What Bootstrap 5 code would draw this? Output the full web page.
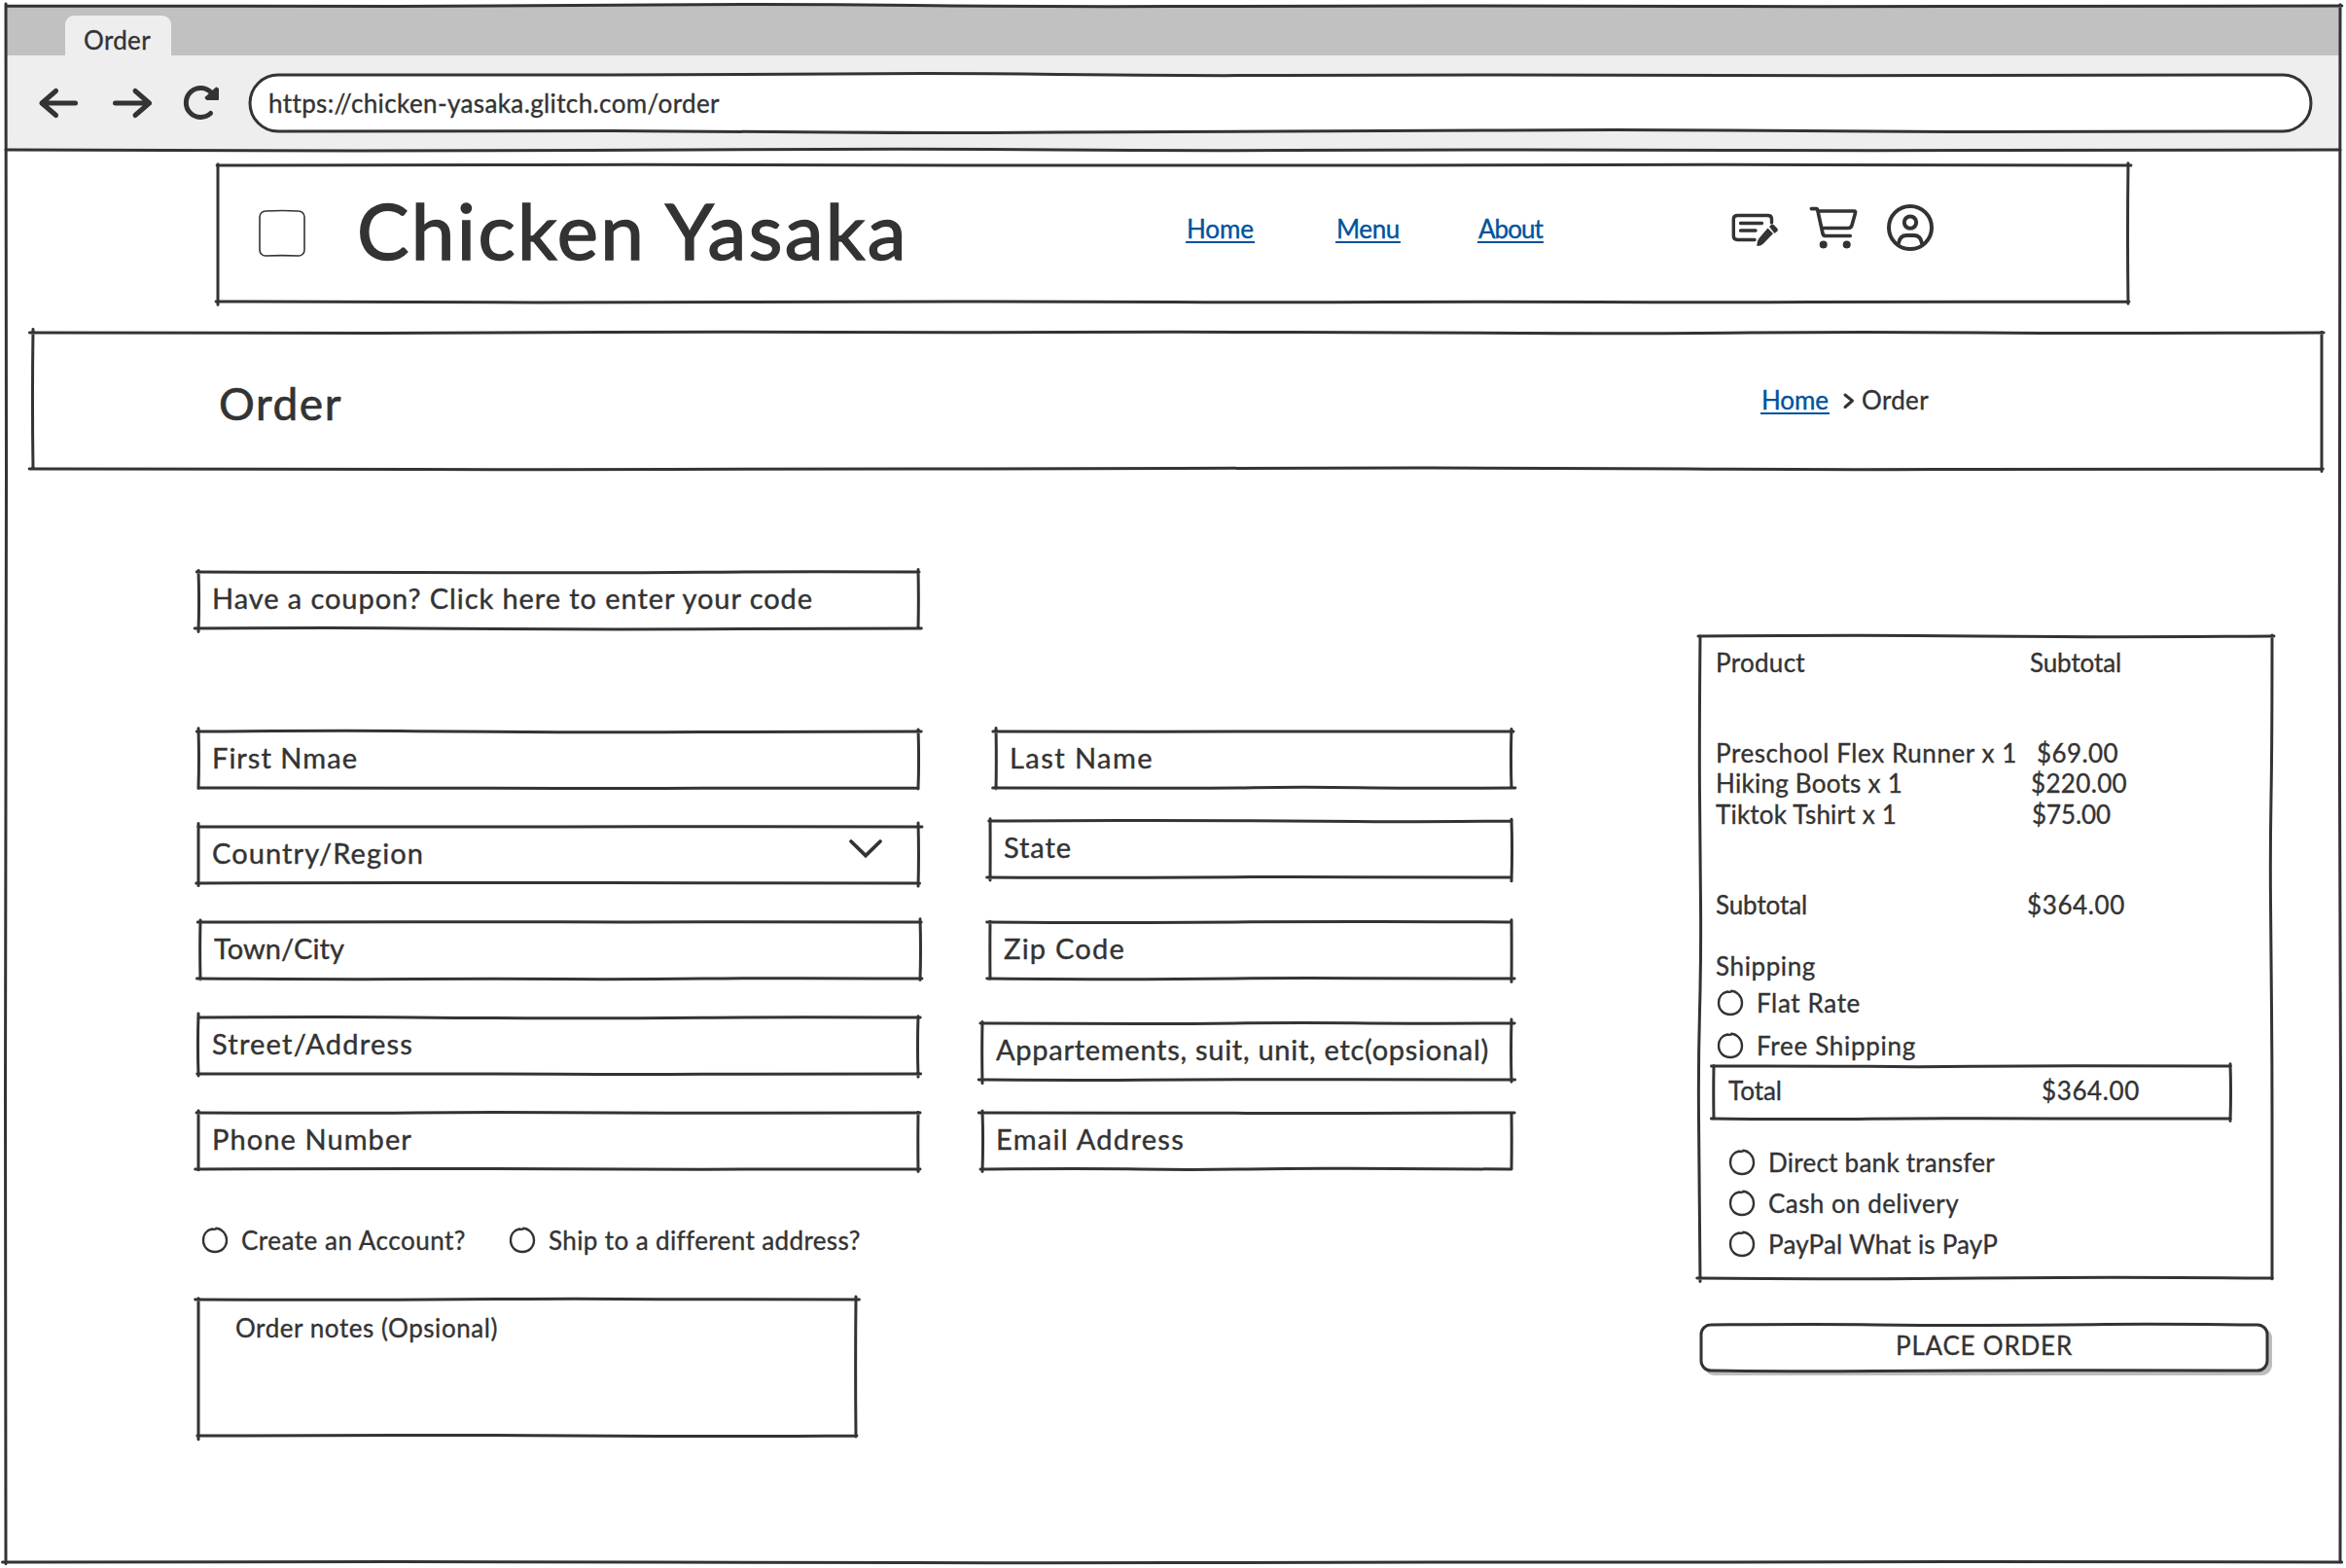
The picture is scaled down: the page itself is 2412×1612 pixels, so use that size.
<!DOCTYPE html>
<html lang="en">
<head>
<meta charset="utf-8">
<title>Order - Chicken Yasaka</title>
<link href="https://cdn.jsdelivr.net/npm/bootstrap@5.3.0/dist/css/bootstrap.min.css" rel="stylesheet">
<style>
:root{--ink:#333;--link:#00529b}
body{width:2412px;height:1612px;overflow:hidden;background:#fff;color:var(--ink);font-family:"Lato","Open Sans",sans-serif;font-size:26px;line-height:31px;-webkit-text-stroke:.35px currentColor;font-kerning:normal}
svg{overflow:visible;flex:none}
[data-w]{white-space:nowrap;display:inline-block}
.sketch{position:relative}
.outline{position:absolute;left:0;top:0;width:100%;height:100%;pointer-events:none;fill:none;stroke:var(--ink);stroke-width:3;stroke-linecap:round}
.window{width:2400px;height:1600px;margin:6px 0 0 6px}
.tabs-strip{height:51px;background:#c1c1c1;padding-left:61px}
.tab-item{width:109px;height:42px;margin-top:10px;background:#eee;border-radius:9px 9px 0 0;padding:10px 0 0 19px;line-height:30px}
.toolbar{height:97px;background:#eee;padding-left:35px}
.address{width:2119px;height:58px;margin:20px 0 0 26px;background:#fff;border-radius:29px;padding-left:19px;line-height:59px}
.brandbar{width:1964px;height:140px;margin:16px 0 0 218px}
.tick{width:46px;height:46px;margin:47px 0 0 43px}
.tick .outline{stroke-width:1.6}
.site-title{font-size:80px;line-height:96px;margin:18px 0 0 54px;width:563px;-webkit-text-stroke-width:1.5px}
.lnk{color:var(--link);text-decoration:none;border-bottom:2.5px solid var(--link);line-height:25px;padding:0 1px}
.titlebar{width:2353px;height:140px;margin:32px 0 0 28px}
.page-title{font-size:46px;line-height:56px;margin:45px 0 0 191px;-webkit-text-stroke-width:.7px}
.crumbs{margin:57px 0 0 1458px}
.field{height:58px;font-size:29px;line-height:54px;padding-left:14px;-webkit-text-stroke-width:.4px}
.left-col{width:742px;margin:106px 0 0 198px}
.mid-col{width:544px;margin:270px 0 0 64px}
.right-col{width:588px;margin:172px 0 0 194px}
.w-740{width:740px}.w-536{width:536px}.w-530{width:530px}
.mt-40{margin-top:40px}.mt-34{margin-top:34px}.mt-46{margin-top:46px}
.notes{width:676px;height:140px;padding:14px 0 0 38px}
.summary{height:660px}
.sum-row{height:31.2px;padding-left:16px}
.sum-name{width:323px}
.opt{height:26px;line-height:27px;gap:14px}
.total{width:531px;height:54px;margin-left:14px;line-height:51px;padding-left:15px}
.total .sum-name{width:322px}
.place{width:582px;height:47px;margin:48px 0 0 1px;background:#fff;border-radius:10px;box-shadow:4px 4px 0 1px #bdbdbd;line-height:43px}
</style>
</head>
<body>
<div class="window sketch" data-t="0 1 0 -2 1 0 0 1 0 0" data-b="0 -1 0 0 1 0 0 0 -1 0" data-l="0 1 0 0 -1 0" data-r="0 0 -1 0 1 0">
  <div class="tabs-strip d-flex"><div class="tab-item"><span data-w="69">Order</span></div></div>
  <div class="toolbar d-flex sketch" data-only="b" data-b="0 1 1 0 -1 1 0 0 1 0 0">
    <svg width="190" height="97" viewBox="41 57 190 97" fill="none" stroke="#333" stroke-width="5" stroke-linecap="round" stroke-linejoin="round">
      <path d="M43 106H77.500M57.500 93.500L43 106L57.500 118.500"/>
      <path d="M118.500 106H153.500M139 93.500L153.500 106L139 118.500"/>
      <path d="M217.500 95.500A15 15 0 1 0 216.500 116.500"/>
      <path d="M224 91.500V102H213L211.500 100.500L222.500 90.500Z" fill="#333" stroke-width="2"/>
    </svg>
    <div class="address sketch" data-round="29" data-t="0 0 0 -2 1 0 0 1 0 0" data-b="0 1 0 -2 0 0 2 0 -1 0"><span data-w="463">https://chicken-yasaka.glitch.com/order</span></div>
  </div>

  <header class="brandbar d-flex align-items-start sketch" data-t="0 0 -1 0 0 0 0 -1 0 0" data-b="0 1 1 0 0 1 0 1 0 0">
    <div class="tick sketch" data-round="6"></div>
    <h1 class="site-title mb-0 fw-normal"><span data-w="567">Chicken Yasaka</span></h1>
    <nav class="d-flex" style="margin:53px 0 0 289px">
      <a class="lnk" href="#" data-w="71">Home</a>
      <a class="lnk" href="#" data-w="67" style="margin-left:83px">Menu</a>
      <a class="lnk" href="#" data-w="68" style="margin-left:79px">About</a>
    </nav>
    <svg class="ms-auto" style="margin:40px 202px 0 0" width="206" height="50" viewBox="0 0 206 50" fill="none" stroke="#333" stroke-width="3.400" stroke-linecap="round" stroke-linejoin="round">
      <path d="M24 36.500H6.500Q2.300 36.500 2.300 32.500V15Q2.300 11.500 6.500 11.500H37.500Q41.500 11.500 41.500 15V19M9.500 19.500H31.500M9.500 27H25"/>
      <path d="M37.500 24.500L43 30L33 40.500Q31 42.800 27 42.900Q26.300 42.900 26.300 42Q26.500 37.500 28.500 35Z" fill="#333" stroke="none"/>
      <path d="M39 23L41.500 20.800Q43 20.500 44 21.500L47 24.500Q48.500 26 47.500 27.500L44.500 30Z" fill="#333" stroke="none"/>
      <path d="M82.300 4.600H87.500Q88.500 4.600 88.800 6.300L94 30Q94.500 32.500 97 32.500H122.300M89 7H126.500Q128 7 127.500 9L124 21.500Q123.200 24.500 120 24.500H93" stroke-width="3.600"/>
      <circle cx="94.700" cy="41.400" r="4" fill="#333" stroke="none"/><circle cx="118.700" cy="41.400" r="4" fill="#333" stroke="none"/>
      <circle cx="184" cy="24" r="22" stroke-width="4"/>
      <circle cx="184" cy="18.600" r="6.200" stroke-width="4"/>
      <path d="M172 40Q173.500 32 180 32H188Q194.500 32 196 40" stroke-width="4"/>
    </svg>
  </header>

  <section class="titlebar d-flex align-items-start sketch" data-t="0 1 0 -1 0 -1 0 1 -1 1 0" data-b="0 0 1 0 0 -1 -1 1 0 0">
    <h2 class="page-title mb-0 fw-normal" style="width:127px"><span data-w="127">Order</span></h2>
    <div class="crumbs d-flex align-items-start">
      <a class="lnk" href="#" data-w="71">Home</a>
      <svg style="margin:5px 8px 0 14px" width="11" height="16" viewBox="0 0 11 16" fill="none" stroke="#333" stroke-width="3" stroke-linecap="round" stroke-linejoin="round"><path d="M2 2L9.500 8L2 14.500"/></svg>
      <span data-w="69" style="line-height:25px">Order</span>
    </div>
  </section>

  <main class="d-flex align-items-start">
    <form class="left-col">
      <div class="field w-740 sketch"><span data-w="618">Have a coupon? Click here to enter your code</span></div>
      <div class="field w-740 sketch" style="margin-top:106px"><span data-w="150">First Nmae</span></div>
      <div class="field w-740 sketch mt-40 d-flex"><span data-w="218">Country/Region</span>
        <svg class="ms-auto" style="margin:12px 36px 0 0" width="36" height="22" viewBox="0 0 36 22" fill="none" stroke="#333" stroke-width="3.800" stroke-linecap="round"><path d="M3 3L18 17.500L33 3"/></svg></div>
      <div class="field w-740 sketch mt-40" style="margin-left:2px"><span data-w="134">Town/City</span></div>
      <div class="field w-740 sketch mt-40"><span data-w="207">Street/Address</span></div>
      <div class="field w-740 sketch mt-40"><span data-w="206">Phone Number</span></div>
      <div class="d-flex" style="margin:60px 0 0 4px">
        <label class="opt d-flex"><svg class="radio" width="26" height="26"></svg><span data-w="231">Create an Account?</span></label>
        <label class="opt d-flex" style="margin-left:45px"><svg class="radio" width="26" height="26"></svg><span data-w="320">Ship to a different address?</span></label>
      </div>
      <div class="notes sketch" style="margin-top:48px"><span data-w="270">Order notes (Opsional)</span></div>
    </form>

    <div class="mid-col d-flex flex-column align-items-end">
      <div class="field w-530 sketch"><span data-w="148">Last Name</span></div>
      <div class="field w-536 sketch mt-34"><span data-w="70">State</span></div>
      <div class="field w-536 sketch mt-46"><span data-w="125">Zip Code</span></div>
      <div class="field w-100 sketch mt-46"><span data-w="507">Appartements, suit, unit, etc(opsional)</span></div>
      <div class="field w-100 sketch mt-34"><span data-w="194">Email Address</span></div>
    </div>

    <aside class="right-col">
      <div class="summary sketch" data-t="0 -1 0 1 0" data-b="0 1 0 -1 0" data-l="0 -1 0 1 -2 -1 0" data-r="0 0 -2 -1 0 0 0">
        <div class="sum-row d-flex" style="padding-top:12px"><div class="sum-name"><span data-w="92">Product</span></div><span data-w="94">Subtotal</span></div>
        <div style="height:74px"></div>
        <div class="sum-row d-flex"><div class="sum-name"><span data-w="310">Preschool Flex Runner x 1</span></div><span data-w="84" style="margin-left:7px">$69.00</span></div>
        <div class="sum-row d-flex"><div class="sum-name"><span data-w="192">Hiking Boots x 1</span></div><span data-w="99" style="margin-left:1px">$220.00</span></div>
        <div class="sum-row d-flex"><div class="sum-name"><span data-w="186">Tiktok Tshirt x 1</span></div><span data-w="81" style="margin-left:2px">$75.00</span></div>
        <div style="height:62.400px"></div>
        <div class="sum-row d-flex"><div class="sum-name"><span data-w="94">Subtotal</span></div><span data-w="101" style="margin-left:-3px">$364.00</span></div>
        <div style="height:31.200px"></div>
        <div class="sum-row"><span data-w="103">Shipping</span></div>
        <label class="opt d-flex" style="margin:9px 0 0 18px"><svg class="radio" width="26" height="26"></svg><span data-w="107">Flat Rate</span></label>
        <label class="opt d-flex" style="margin:18px 0 0 18px"><svg class="radio" width="26" height="26"></svg><span data-w="164">Free Shipping</span></label>
        <div class="total sketch d-flex" style="margin-top:8px"><div class="sum-name"><span data-w="55">Total</span></div><span data-w="101">$364.00</span></div>
        <label class="opt d-flex" style="margin:32px 0 0 30px"><svg class="radio" width="26" height="26"></svg><span data-w="233">Direct bank transfer</span></label>
        <label class="opt d-flex" style="margin:16px 0 0 30px"><svg class="radio" width="26" height="26"></svg><span data-w="196">Cash on delivery</span></label>
        <label class="opt d-flex" style="margin:16px 0 0 30px"><svg class="radio" width="26" height="26"></svg><span data-w="236">PayPal What is PayP</span></label>
      </div>
      <div class="place sketch text-center" role="button" data-round="10"><span data-w="182">PLACE ORDER</span></div>
    </aside>
  </main>
</div>
<script src="https://cdn.jsdelivr.net/npm/bootstrap@5.3.0/dist/js/bootstrap.bundle.min.js"></script>
<script>
// Track each label to its set width.
document.querySelectorAll('[data-w]').forEach(function (e) {
  var n = e.textContent.length, w = e.getBoundingClientRect().width;
  e.style.letterSpacing = ((+e.dataset.w - w) / n).toFixed(3) + 'px';
});
// Hand-drawn outlines: every side is a slightly wavering pen stroke.
var NS = 'http://www.w3.org/2000/svg', seed = 11;
function rnd() { seed = (seed * 16807) % 2147483647; return seed / 2147483647; }
function offsets(s, len) {
  if (s) return s.split(' ').map(Number);
  var n = len > 300 ? 5 : 2, a = [0];
  for (var i = 1; i < n; i++) a.push((rnd() - .5) * 2.2);
  return a.concat(0);
}
function side(x1, y1, x2, y2, off, o1, o2) {
  var L = Math.hypot(x2 - x1, y2 - y1), ux = (x2 - x1) / L, uy = (y2 - y1) / L, n = off.length - 1;
  var p = off.map(function (o, i) { return [x1 + ux * L * i / n + Math.abs(uy) * o, y1 + uy * L * i / n + Math.abs(ux) * o]; });
  p[0][0] -= ux * o1; p[0][1] -= uy * o1; p[n][0] += ux * o2; p[n][1] += uy * o2;
  var d = p[0].join(' ');
  for (var i = 1; i < n; i++) {
    var last = i === n - 1, q = last ? p[n] : [(p[i][0] + p[i + 1][0]) / 2, (p[i][1] + p[i + 1][1]) / 2];
    d += 'Q' + p[i].join(' ') + ' ' + q.join(' ');
  }
  return d;
}
document.querySelectorAll('.sketch').forEach(function (e) {
  var W = e.offsetWidth, H = e.offsetHeight, s = e.dataset, r = +s.round || 0, d;
  var t = offsets(s.t, W), b = offsets(s.b, W), l = offsets(s.l, H), g = offsets(s.r, H);
  function o() { return rnd() * 4; }
  if (r) {
    var arc = 'A' + r + ' ' + r + ' 0 0 1 ';
    d = 'M' + side(r, 0, W - r, 0, t, 0, 0) + arc + W + ' ' + r + 'L' + W + ' ' + (H - r) + arc + (W - r) + ' ' + H +
        'L' + side(W - r, H, r, H, b, 0, 0) + arc + '0 ' + (H - r) + 'L0 ' + r + arc + r + ' 0';
  } else if (s.only) {
    d = 'M' + side(0, H, W, H, b, 0, 0);
  } else {
    d = 'M' + side(0, 0, W, 0, t, o(), o()) + 'M' + side(W, 0, W, H, g, o(), o()) +
        'M' + side(0, H, W, H, b, o(), o()) + 'M' + side(0, 0, 0, H, l, o(), o());
  }
  var v = document.createElementNS(NS, 'svg'), p = document.createElementNS(NS, 'path');
  v.setAttribute('class', 'outline'); p.setAttribute('d', d); v.appendChild(p); e.appendChild(v);
});
document.querySelectorAll('.radio').forEach(function (v) {
  var p = document.createElementNS(NS, 'path');
  p.setAttribute('d', 'M13.500 .8C20 1 25 6.500 25 13C25 20 20 25 13 25C6 25 1 20 1 13C1 7 4.500 2.500 10 1.500Q12.500 2.400 15 .9');
  p.setAttribute('fill', 'none'); p.setAttribute('stroke', '#333'); p.setAttribute('stroke-width', '2.400');
  v.appendChild(p);
});
</script>
</body>
</html>
